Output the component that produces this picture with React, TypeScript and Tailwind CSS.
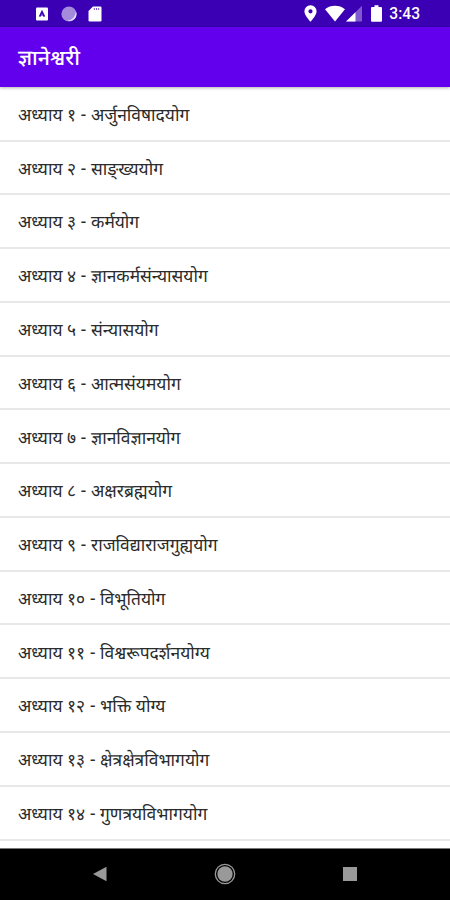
import React from "react";

const chapters = [
  { title: "अध्याय १ - अर्जुनविषादयोग" },
  { title: "अध्याय २ - साङ्ख्ययोग" },
  { title: "अध्याय ३ - कर्मयोग" },
  { title: "अध्याय ४ - ज्ञानकर्मसंन्यासयोग" },
  { title: "अध्याय ५ - संन्यासयोग" },
  { title: "अध्याय ६ - आत्मसंयमयोग" },
  { title: "अध्याय ७ - ज्ञानविज्ञानयोग" },
  { title: "अध्याय ८ - अक्षरब्रह्मयोग" },
  { title: "अध्याय ९ - राजविद्याराजगुह्ययोग" },
  { title: "अध्याय १० - विभूतियोग" },
  { title: "अध्याय ११ - विश्वरूपदर्शनयोग्य" },
  // Sanskrit shaping gives the joined form of क्ति
  { title: "अध्याय १२ - भक्ति योग्य", lang: "sa" },
  { title: "अध्याय १३ - क्षेत्रक्षेत्रविभागयोग" },
  { title: "अध्याय १४ - गुणत्रयविभागयोग" },
];

const StatusBar: React.FC = () => (
  <div className="flex h-[27px] shrink-0 items-center justify-between bg-[#3b00b3] pl-[35px] pr-[30px] text-white">
    {/* Notifications */}
    <div className="flex items-center gap-[11.5px]">
      <svg className="h-[14px] w-[14px]" viewBox="0 0 14 14">
        <rect x="1" y="0.5" width="12" height="13" rx="1" fill="white" />
        <path d="M4.6 9.6 7 4.6l2.4 5" fill="none" stroke="#3b00b3" strokeWidth="1.7" />
        <path d="M6 8h2" stroke="#3b00b3" />
      </svg>
      <svg className="h-4 w-4" viewBox="0 0 16 16">
        <circle cx="8" cy="8" r="7.6" fill="#a48bdc" />
        <path d="M15 5.5a7 7 0 0 1-8.5 9.2c4.5-.6 7.5-3.7 8.5-9.2z" fill="#e6dcff" />
      </svg>
      <svg className="h-4 w-[14px]" viewBox="0 0 14 16">
        <path d="M5 .5h7.2a1.3 1.3 0 0 1 1.3 1.3v12.4a1.3 1.3 0 0 1-1.3 1.3H1.8A1.3 1.3 0 0 1 .5 14.2V5z" fill="white" />
        <path d="M6.3 2v2M8.5 2v2M10.7 2v2" stroke="#3b00b3" strokeWidth="1" opacity=".7" />
      </svg>
    </div>
    {/* System icons */}
    <div className="flex items-center">
      <svg className="h-[17px] w-[13px]" viewBox="0 0 13 17">
        <path
          d="M6.5.3A6 6 0 0 0 .4 6.3C.4 10.6 6.5 16.7 6.5 16.7s6.1-6.1 6.1-10.4A6 6 0 0 0 6.5.3zm0 3.9a2.1 2.1 0 1 1 0 4.2 2.1 2.1 0 0 1 0-4.2z"
          fill="white"
        />
      </svg>
      <svg className="ml-2 h-[17px] w-[20px]" viewBox="0 0 20 17">
        <path d="M0 4.2C5.5-.3 14.5-.3 20 4.2L10 16.5z" fill="white" />
      </svg>
      <svg className="ml-[1px] h-[17px] w-[16px]" viewBox="0 0 16 17">
        <path d="M0 16.5 16 .8v15.7z" fill="white" opacity=".35" />
        <path d="M0 16.5 9.5 7.2v9.3z" fill="white" />
      </svg>
      <svg className="ml-[9px] h-[17px] w-[11px]" viewBox="0 0 11 17">
        <path d="M3.5.3h4v1.6H10a1 1 0 0 1 1 1v12.8a1 1 0 0 1-1 1H1a1 1 0 0 1-1-1V2.9a1 1 0 0 1 1-1h2.5z" fill="white" />
      </svg>
      <span className="ml-[7px] pt-[3px] font-['Roboto',sans-serif] text-[15.6px] leading-none font-medium">3:43</span>
    </div>
  </div>
);

const NavBar: React.FC = () => (
  <nav className="flex h-[52px] shrink-0 items-center justify-center gap-[103px] border-t border-[#777] bg-black pb-[1px] text-[#999]">
    <svg className="h-[22px] w-[22px]" viewBox="0 0 22 22">
      <path d="M4 11 17.5 3.7v14.6z" fill="currentColor" />
    </svg>
    <svg className="h-[22px] w-[22px]" viewBox="0 0 22 22">
      <circle cx="11" cy="11" r="9.7" fill="none" stroke="currentColor" strokeWidth="1.3" />
      <circle cx="11" cy="11" r="7.7" fill="currentColor" />
    </svg>
    <svg className="h-[22px] w-[22px]" viewBox="0 0 22 22">
      <rect x="4" y="4" width="14" height="14" fill="currentColor" />
    </svg>
  </nav>
);

const App: React.FC = () => {
  return (
    <div
      lang="mr"
      className="flex h-[900px] w-[450px] flex-col overflow-hidden bg-white font-['Noto_Sans_Devanagari','Noto_Sans',sans-serif]"
    >
      <StatusBar />
      <header className="relative flex h-[60px] shrink-0 items-center bg-[#6200ee] pt-[8px] pl-[18px] text-[21.3px] font-medium text-white shadow-[0_1px_3px_rgba(0,0,0,0.3)]">
        ज्ञानेश्वरी
      </header>
      <ul className="flex-1 overflow-hidden pt-[0.8px]">
        {chapters.map((chapter) => (
          <li
            key={chapter.title}
            lang={chapter.lang}
            className="flex h-[53.77px] items-center border-b-2 border-[#e8e8e8] pt-[6.6px] pl-[18px] text-[17.4px] text-[#2b2b2b]"
          >
            <span>{chapter.title}</span>
          </li>
        ))}
      </ul>
      <NavBar />
    </div>
  );
};

export default App;
